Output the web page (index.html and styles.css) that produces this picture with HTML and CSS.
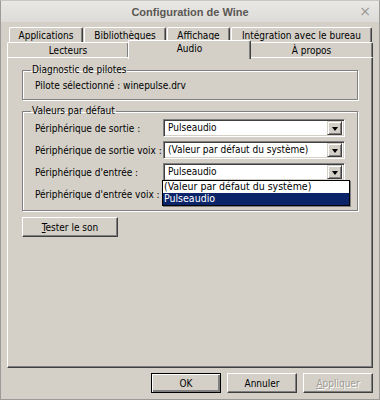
FILE: index.html
```html
<!DOCTYPE html>
<html lang="fr">

<head>
    <meta charset="UTF-8">
    <title>Configuration de Wine</title>
    <link rel="stylesheet" href="styles.css">
</head>

<body>
    <div class="window">
        <div class="titlebar">
            <span class="title">Configuration de Wine</span>
            <span class="close">&times;</span>
        </div>

        <div class="content">
            <div class="tabs">
                <div class="tab-row back">
                    <div class="tab">Applications</div>
                    <div class="tab">Bibliothèques</div>
                    <div class="tab">Affichage</div>
                    <div class="tab">Intégration avec le bureau</div>
                </div>
                <div class="tab-row front">
                    <div class="tab">Lecteurs</div>
                    <div class="tab active">Audio</div>
                    <div class="tab">À propos</div>
                </div>
            </div>

            <div class="panel">
                <fieldset class="group diag">
                    <legend>Diagnostic de pilotes</legend>
                    <p class="info">Pilote sélectionné : winepulse.drv</p>
                </fieldset>

                <fieldset class="group defaults">
                    <legend>Valeurs par défaut</legend>
                    <div class="row">
                        <span class="label">Périphérique de sortie :</span>
                        <div class="combo"><span class="value">Pulseaudio</span><span class="arrow"></span></div>
                    </div>
                    <div class="row">
                        <span class="label">Périphérique de sortie voix :</span>
                        <div class="combo"><span class="value">(Valeur par défaut du système)</span><span class="arrow"></span></div>
                    </div>
                    <div class="row">
                        <span class="label">Périphérique d'entrée :</span>
                        <div class="combo open"><span class="value">Pulseaudio</span><span class="arrow"></span>
                            <ul class="dropdown">
                                <li>(Valeur par défaut du système)</li>
                                <li class="selected">Pulseaudio</li>
                            </ul>
                        </div>
                    </div>
                    <div class="row">
                        <span class="label">Périphérique d'entrée voix :</span>
                        <!-- hidden under the open list -->
                        <div class="combo"><span class="value"></span><span class="arrow"></span></div>
                    </div>
                </fieldset>

                <button class="button test"><u>T</u>ester le son</button>
            </div>

            <div class="actions">
                <button class="button default">OK</button>
                <button class="button">Annuler</button>
                <button class="button" disabled><u>A</u>ppliquer</button>
            </div>
        </div>
    </div>
</body>

</html>
```

FILE: styles.css
```css
body {
    margin: 0;
    padding: 0;
    background-color: #d4d0c8;
    font-family: "DejaVu Sans Condensed", "Liberation Sans", sans-serif;
    font-size: 10px;
    color: #000;
}

.window {
    width: 380px;
    height: 400px;
    box-sizing: border-box;
    border: 1px solid #9d9b97;
    border-top-color: #c9c7c4;
    background-color: #d4d0c8;
    display: flex;
    flex-direction: column;
}

/* Title bar */
.titlebar {
    height: 21px;
    flex: none;
    position: relative;
    display: flex;
    align-items: center;
    justify-content: center;
    background: linear-gradient(#e9e8e6, #dddbd7);
}

.title {
    font-family: "Liberation Sans", sans-serif;
    font-weight: bold;
    font-size: 11px;
    color: #5a5753;
}

.close {
    position: absolute;
    right: 8px;
    top: 2px;
    font-family: "DejaVu Sans", sans-serif;
    font-size: 14px;
    color: #9a9894;
}

.content {
    flex: 1;
    display: flex;
    flex-direction: column;
    padding: 5px 6px 0 6px;
}

/* Tabs */
.tabs {
    display: flex;
    flex-direction: column;
    height: 30px;
}

.tab-row {
    display: grid;
    height: 15px;
}

.tab-row.back {
    grid-template-columns: 74px 82px 63px 141px;
    column-gap: 1px;
    padding-left: 2px;
}

.tab-row.front {
    grid-template-columns: 122px 121px 123px;
}

.tab {
    box-sizing: border-box;
    height: 16px;
    border-top: 1px solid #fff;
    border-left: 1px solid #fff;
    border-right: 1px solid #404040;
    border-radius: 2px 2px 0 0;
    box-shadow: inset -1px 0 0 #808080;
    text-align: center;
    line-height: 16px;
    background-color: #d4d0c8;
}

.tab.active {
    position: relative;
    z-index: 2;
    height: 19px;
    margin-top: -2px;
    margin-left: -1px;
    margin-right: -1px;
    line-height: 15px;
}

/* Panel */
.panel {
    box-sizing: border-box;
    height: 311px;
    margin-top: 0;
    border-top: 1px solid #fff;
    border-left: 1px solid #fff;
    border-right: 1px solid #404040;
    border-bottom: 1px solid #404040;
    box-shadow: inset -1px -1px 0 #808080;
    padding: 6px 14px 0 14px;
    display: flex;
    flex-direction: column;
}

.group {
    margin: 0;
    padding: 0 12px;
    border: 1px solid #808080;
    box-shadow: 1px 1px 0 #fff, inset 1px 1px 0 #fff;
    min-width: 0;
}

.group legend {
    padding: 0 1px;
    margin-left: -4px;
    line-height: 12px;
}

.diag {
    height: 36px;
    box-sizing: border-box;
}

.info {
    margin: 4px 0 0 0;
}

.defaults {
    margin-top: 5px;
    padding-top: 0;
    padding-bottom: 5px;
}

.row {
    display: flex;
    align-items: center;
    height: 22px;
}

.label {
    width: 128px;
    flex: none;
}

/* Combo box */
.combo {
    position: relative;
    box-sizing: border-box;
    width: 185px;
    height: 18px;
    background-color: #fff;
    border-top: 1px solid #808080;
    border-left: 1px solid #808080;
    border-right: 1px solid #fff;
    border-bottom: 1px solid #fff;
    box-shadow: inset 1px 1px 0 #404040, inset -1px -1px 0 #d4d0c8;
    display: flex;
    align-items: center;
    padding: 2px;
}

.value {
    flex: 1;
    padding-left: 2px;
    line-height: 12px;
}

.arrow {
    box-sizing: border-box;
    width: 15px;
    height: 14px;
    background-color: #d4d0c8;
    border-top: 1px solid #d4d0c8;
    border-left: 1px solid #d4d0c8;
    border-right: 1px solid #404040;
    border-bottom: 1px solid #404040;
    box-shadow: inset 1px 1px 0 #fff, inset -1px -1px 0 #808080;
    display: flex;
    align-items: center;
    justify-content: center;
}

.arrow::after {
    content: "";
    border-left: 3px solid transparent;
    border-right: 3px solid transparent;
    border-top: 4px solid #000;
    margin-top: 1px;
}

.dropdown {
    position: absolute;
    z-index: 5;
    left: -2px;
    top: 16px;
    width: 188px;
    box-sizing: border-box;
    margin: 0;
    padding: 0;
    list-style: none;
    background-color: #fff;
    border: 1px solid #000;
    box-shadow: 1px 1px 0 #808080;
}

.dropdown li {
    height: 12px;
    line-height: 11px;
    padding-left: 1px;
    font-size: 10.5px;
}

.dropdown li.selected {
    background-color: #0a246a;
    color: #fff;
}

/* Buttons */
.button {
    box-sizing: border-box;
    font-family: inherit;
    font-size: 10px;
    color: #000;
    background-color: #d4d0c8;
    border-top: 1px solid #fff;
    border-left: 1px solid #fff;
    border-right: 1px solid #404040;
    border-bottom: 1px solid #404040;
    box-shadow: inset -1px -1px 0 #808080;
    border-radius: 0;
    padding: 0;
    cursor: pointer;
}

.button u {
    text-decoration: underline;
}

.test {
    width: 96px;
    height: 20px;
    margin-top: 6px;
}

.actions {
    display: flex;
    justify-content: flex-end;
    gap: 6px;
    padding-top: 5px;
}

.actions .button {
    width: 70px;
    height: 20px;
}

.button.default {
    border: 1px solid #000;
    box-shadow: inset 1px 1px 0 #fff, inset -2px -2px 0 #808080;
}

.button:disabled {
    color: #a09c94;
    text-shadow: 1px 1px 0 #fff;
    cursor: default;
}
```
